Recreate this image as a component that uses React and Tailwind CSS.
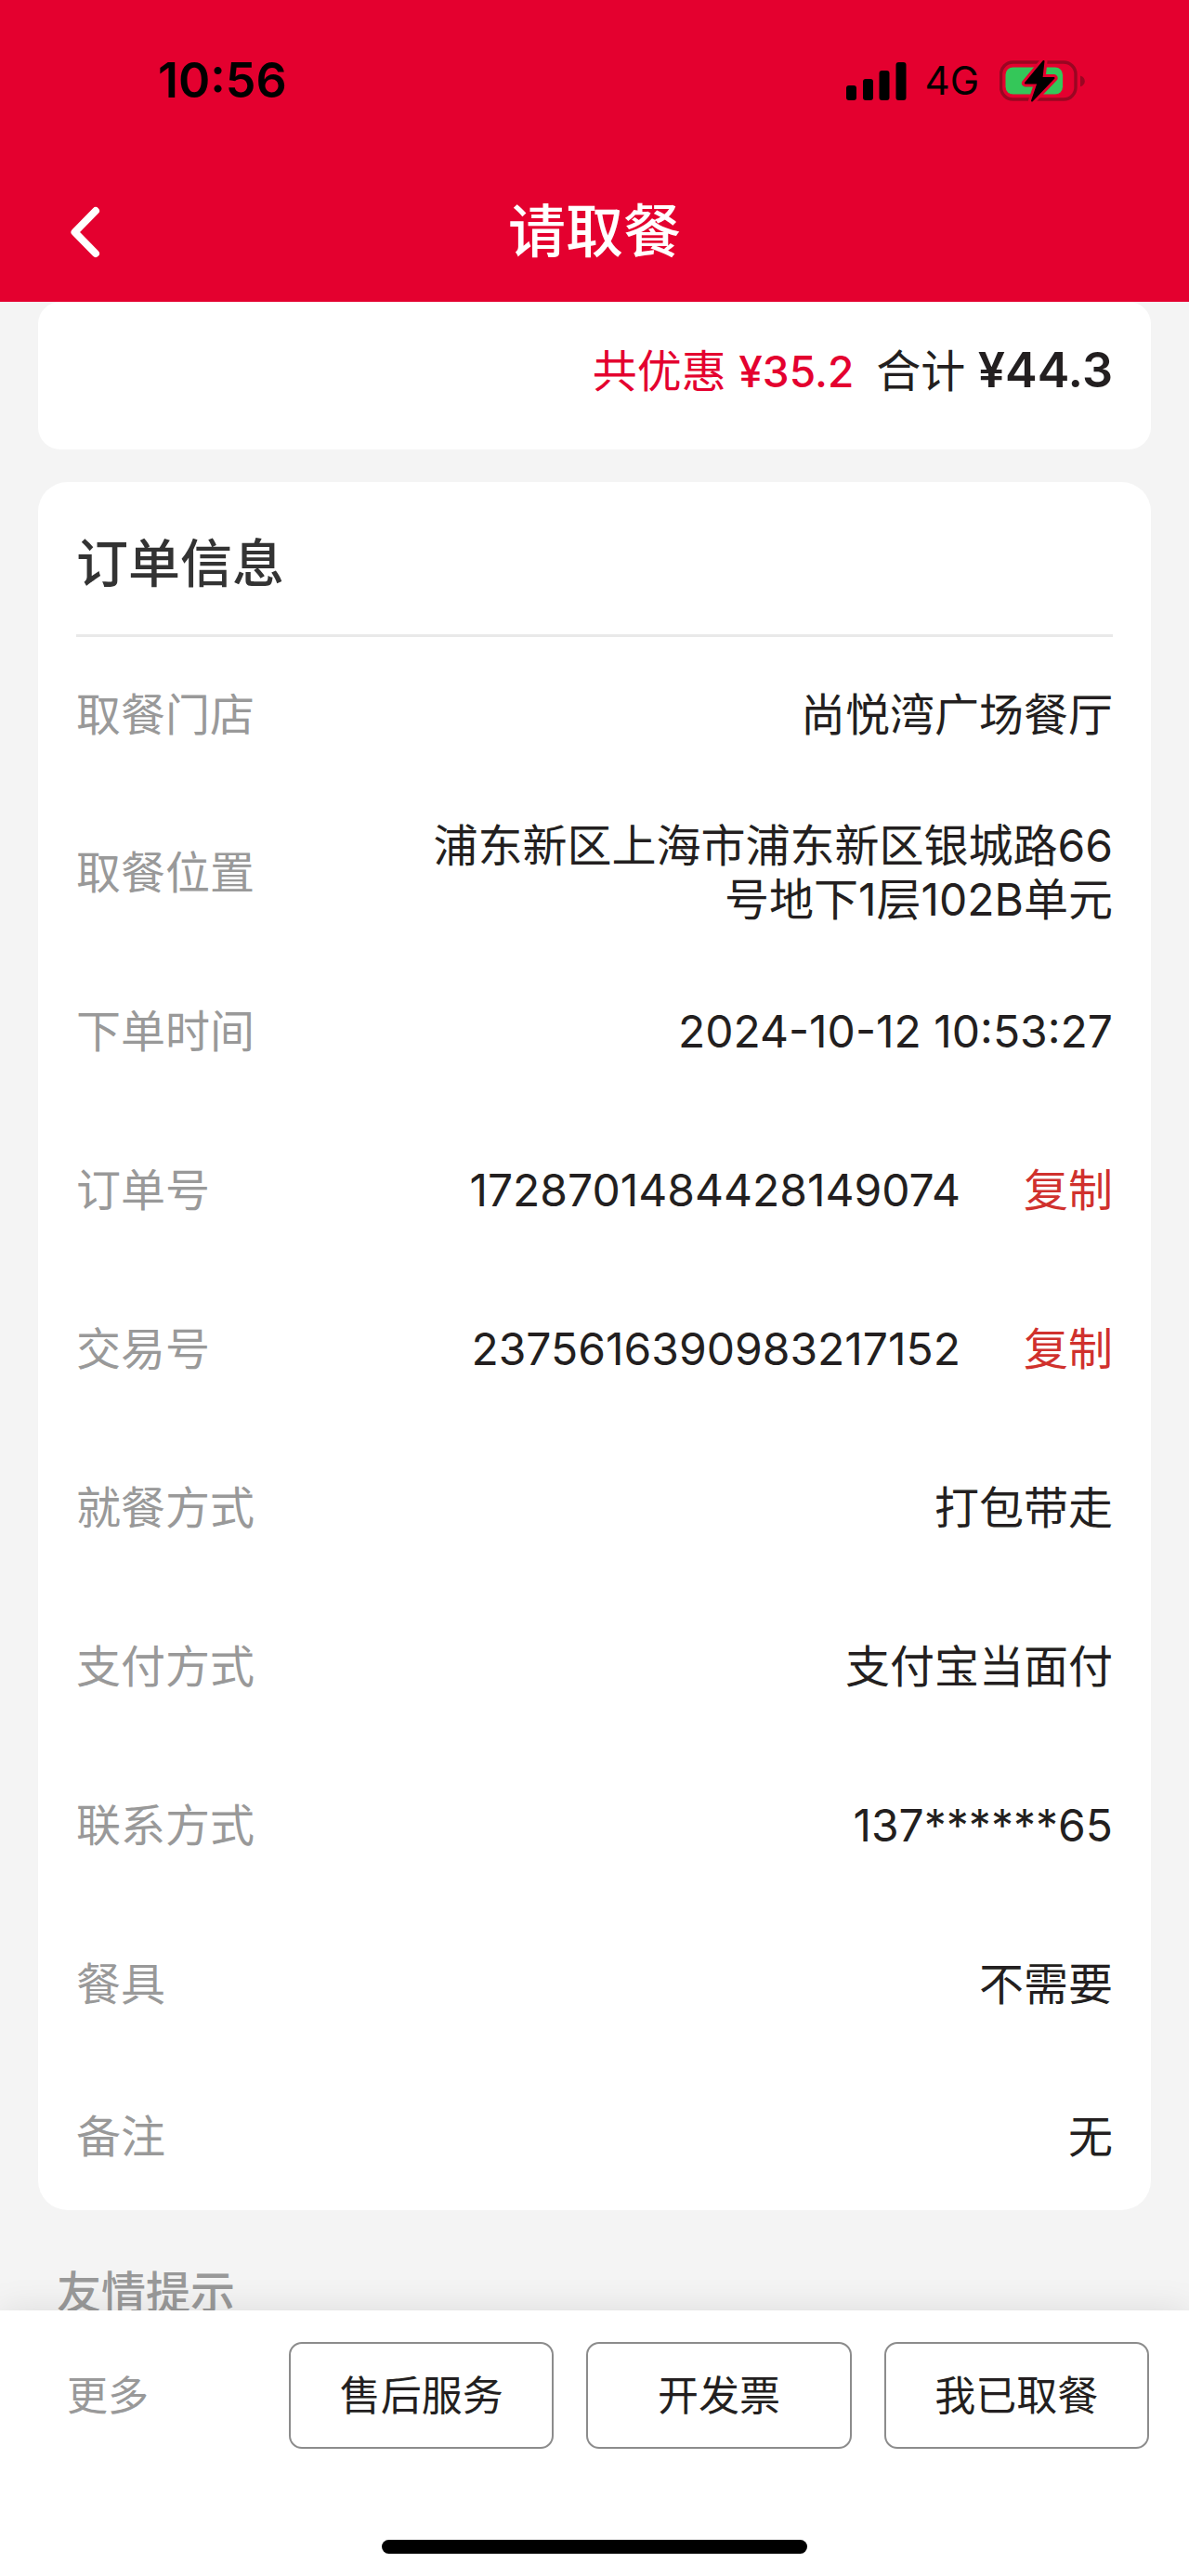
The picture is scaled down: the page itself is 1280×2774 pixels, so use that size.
import React from 'react';

const ORDER_ROWS = [
  { label: '取餐门店', value: '尚悦湾广场餐厅' },
  { label: '取餐位置', value: '浦东新区上海市浦东新区银城路66号地下1层102B单元' },
  { label: '下单时间', value: '2024-10-12 10:53:27' },
  { label: '订单号', value: '1728701484428149074', copy: true },
  { label: '交易号', value: '2375616390983217152', copy: true },
  { label: '就餐方式', value: '打包带走' },
  { label: '支付方式', value: '支付宝当面付' },
  { label: '联系方式', value: '137******65' },
  { label: '餐具', value: '不需要' },
  { label: '备注', value: '无' }
];

const ACTIONS = ['售后服务', '开发票', '我已取餐'];

const SignalIcon = () => (
  <svg width="65" height="42" viewBox="0 0 65 42" aria-hidden="true">
    <rect x="0" y="26" width="11" height="16" rx="3" />
    <rect x="18" y="19" width="11" height="23" rx="3" />
    <rect x="35.5" y="10" width="11" height="32" rx="3" />
    <rect x="53.5" y="1" width="11" height="41" rx="3" />
  </svg>
);

const BatteryIcon = () => (
  <svg width="92" height="46" viewBox="0 0 92 46" aria-hidden="true">
    <rect x="1.5" y="3" width="80.5" height="40" rx="13" fill="none" stroke="#9a0622" strokeWidth="3.4" />
    <path d="M87 17.5c3 1 4.8 3.200 4.800 5.900s-1.800 4.900-4.800 5.900z" fill="#9a0622" />
    <rect x="6.500" y="8.500" width="61.500" height="29" rx="8" fill="#34c759" />
    <path
      d="M47.500 2 28 25.500h13.500L35 44.500 58.500 20H45.500z"
      fill="#e4002f"
      stroke="#e4002f"
      strokeWidth="8"
      strokeLinejoin="round"
    />
    <path
      d="M47.500 2 28 25.500h13.500L35 44.500 58.500 20H45.500z"
      fill="#000"
      stroke="#000"
      strokeWidth="2"
      strokeLinejoin="round"
    />
  </svg>
);

const StatusBar = () => (
  <div className="flex h-[174px] items-center justify-between pl-[170px] pr-[112px] text-black">
    <span className="text-[52px] leading-none font-semibold">10:56</span>
    <div className="flex items-center">
      <SignalIcon />
      <span className="ml-[20px] mr-[22px] text-[42px] leading-none">4G</span>
      <BatteryIcon />
    </div>
  </div>
);

const TitleBar = () => (
  <div className="grid h-[151px] grid-cols-[1fr_auto_1fr] items-center px-[72px] text-white">
    <button type="button" aria-label="返回" className="justify-self-start">
      <svg width="40" height="60" viewBox="0 0 40 60" fill="none" aria-hidden="true">
        <path
          d="M31 7 8.500 30 31 53"
          stroke="currentColor"
          strokeWidth="8"
          strokeLinecap="round"
          strokeLinejoin="round"
        />
      </svg>
    </button>
    <h1 className="text-[62px] leading-none font-medium">请取餐</h1>
  </div>
);

const OrderRow = ({ label, value, copy }) => (
  <div className="flex min-h-[171px] items-center justify-between first:min-h-[168px] last:min-h-[158px]">
    <dt className="shrink-0 text-[#999]">{label}</dt>
    <dd className="flex max-w-[760px] items-center gap-[68px] text-right text-[#231f20]">
      <span>{value}</span>
      {copy && (
        <button type="button" className="shrink-0 text-[#d0312d]">
          复制
        </button>
      )}
    </dd>
  </div>
);

const App = () => {
  return (
    <div className="flex h-screen flex-col bg-[#f4f4f4] font-[Inter,'Noto_Sans_CJK_SC',sans-serif]">
      <header className="shrink-0 bg-[#e4002f]">
        <StatusBar />
        <TitleBar />
      </header>

      <main className="min-h-0 flex-1 overflow-hidden px-[41px] text-[48px] leading-[58px]">
        <section className="flex h-[159px] items-baseline justify-end rounded-[24px] bg-white px-[41px] pt-[45px]">
          <p className="text-[#e4002f]">
            共优惠 <span className="text-[46px] font-medium">¥35.2</span>
          </p>
          <p className="ml-[24px] text-[#231f20]">
            合计 <span className="text-[52px] font-semibold">¥44.3</span>
          </p>
        </section>

        <section className="mt-[35px] rounded-[32px] bg-white px-[41px]">
          <h2 className="border-b-3 border-[#e9e9e9] pt-[48px] pb-[36px] text-[56px] leading-[80px] font-medium text-[#333]">
            订单信息
          </h2>
          <dl>
            {ORDER_ROWS.map((row) => (
              <OrderRow key={row.label} {...row} />
            ))}
          </dl>
        </section>

        <h3 className="mt-[60px] px-[20px] font-medium text-[#999]">友情提示</h3>
      </main>

      <footer className="relative shrink-0 bg-white pt-[34px] pb-[24px] text-[44px] leading-none shadow-[0_0_36px_rgba(0,0,0,0.1)]">
        <div className="flex items-center gap-[35px] pr-[43px] pl-[72px]">
          <button type="button" className="w-[204px] text-left text-[#999]">
            更多
          </button>
          {ACTIONS.map((action) => (
            <button
              key={action}
              type="button"
              className="h-[115px] flex-1 rounded-[14px] border-2 border-[#8c8c8c] text-[#231f20]"
            >
              {action}
            </button>
          ))}
        </div>
        <div className="mx-auto mt-[98px] h-[15px] w-[458px] rounded-full bg-black" />
      </footer>
    </div>
  );
};

export default App;
